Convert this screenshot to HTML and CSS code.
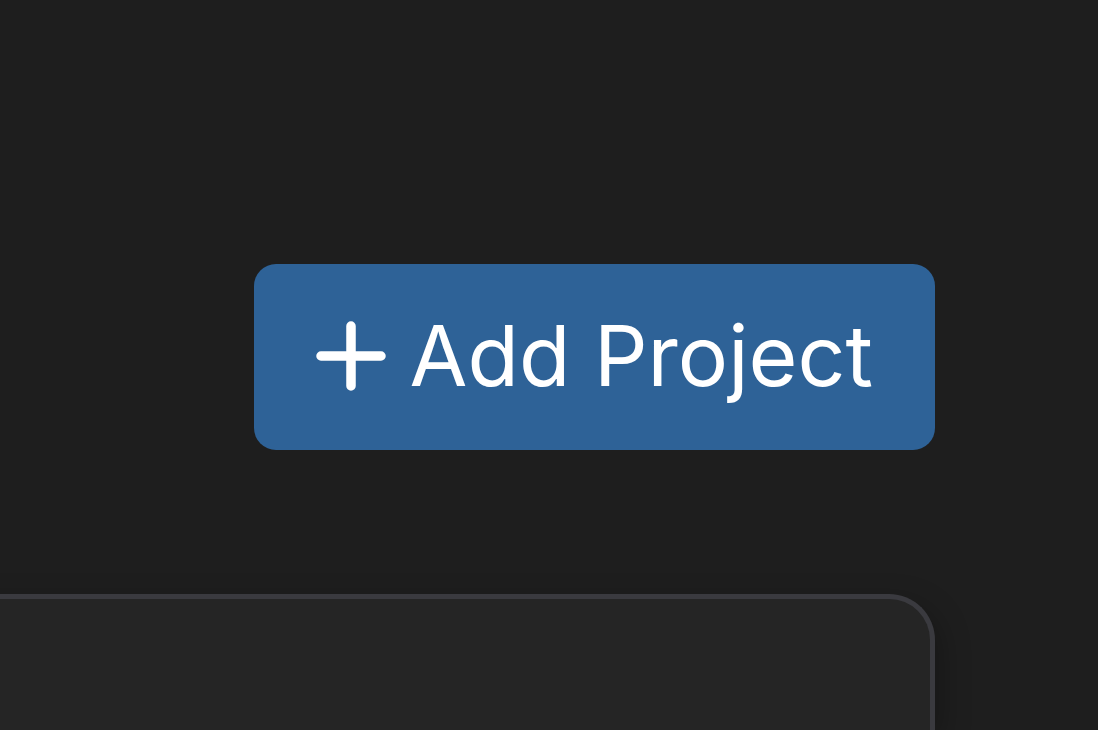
FILE: index.html
```html
<!DOCTYPE html>
<html lang="en">
<head>
	<meta charset="UTF-8">
	<title>Projects</title>
<link rel="stylesheet" href="styles.css">
</head>
<body>
<div class="page">
	<div class="toolbar">
		<a href="#" class="add_btn">
			<svg class="plus" viewBox="0 0 70 70" width="70" height="70">
				<path d="M35 5 V65 M5 35 H65" stroke="#fff" stroke-width="9.5" stroke-linecap="round" fill="none"/>
			</svg>
			<span class="add_text">Add Project</span>
		</a>
	</div>
	<div class="card"></div>
</div>
</body>
</html>
```

FILE: styles.css
```css
	html, body{
		margin: 0;
		height: 100%;
		background-color: #1e1e1e;
		overflow: hidden;
	}
	.page{
		width: 935px;
		height: 100vh;
		box-sizing: border-box;
		padding-top: 264px;
		display: flex;
		flex-direction: column;
		align-items: flex-end;
	}
	.toolbar{
		display: flex;
		justify-content: flex-end;
	}
	.add_btn{
		display: flex;
		align-items: center;
		gap: 24px;
		height: 186px;
		box-sizing: border-box;
		padding: 0 62px 0 62px;
		background-color: #2e6297;
		border-radius: 22px;
		text-decoration: none;
		color: #fff;
		font-family: Inter, "Liberation Sans", sans-serif;
		font-size: 84px;
	}
	.plus{
		display: block;
		width: 70px;
		height: 70px;
		margin-top: -2px;
	}
	.add_text{
		line-height: 1;
		margin-top: -2px;
	}
	.card{
		margin-top: 144px;
		width: 1000px;
		flex: 1;
		background-color: #252525;
		border: 5.5px solid #3a3a3f;
		border-bottom: none;
		border-radius: 46px 46px 0 0;
		box-sizing: border-box;
		box-shadow: 6px 10px 30px rgba(0,0,0,0.25);
	}
```
